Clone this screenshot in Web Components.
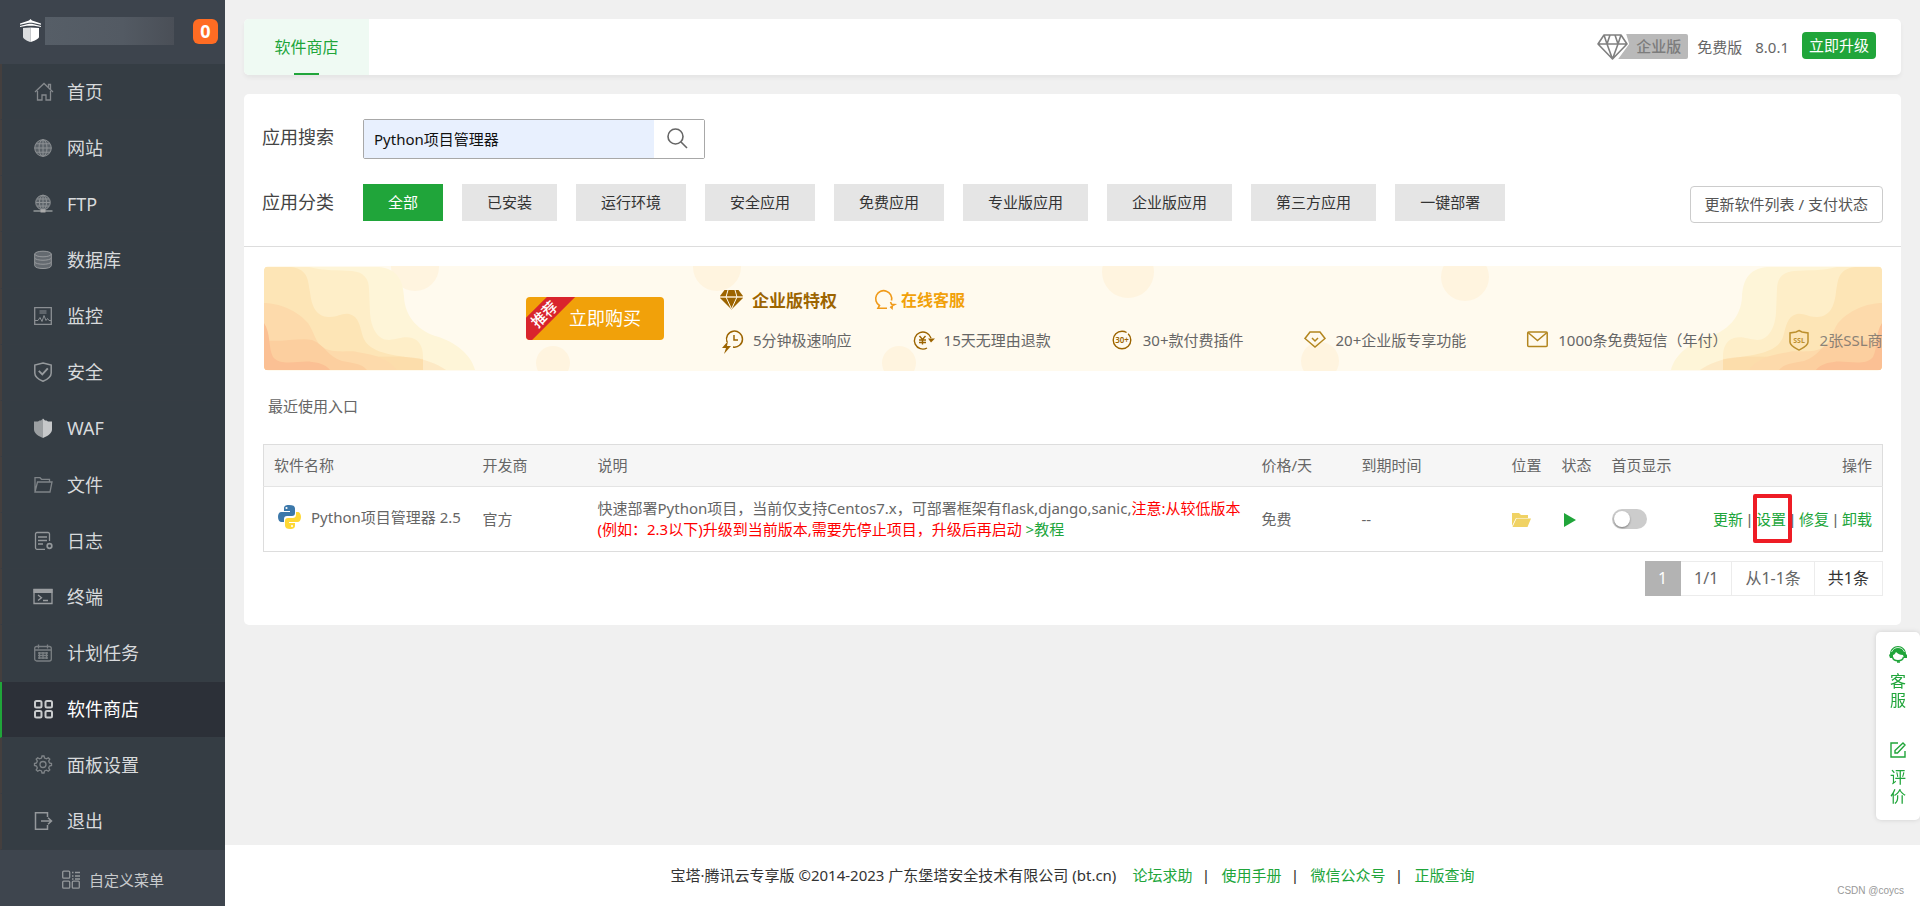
<!DOCTYPE html>
<html lang="zh-CN">
<head>
<meta charset="utf-8">
<meta name="viewport" content="width=device-width, initial-scale=1">
<title>软件商店</title>
<style>
  :root {
    --green: #20a53a;
    --line: #ddd;
    --brown: #9c6400;
    --amber: #f1a10a;
  }
  html, body { margin: 0; }
  body {
    min-height: 100vh;
    display: flex;
    background: #f0f0f0;
    color: #666;
    font: 15px/21px "Noto Sans", "Noto Sans CJK SC", sans-serif;
  }
  main { flex: 1; min-width: 0; display: flex; flex-direction: column; }
  .body { flex: 1; display: flex; flex-direction: column; gap: 19px; padding: 19px; }
</style>
</head>
<body>
<side-bar>
  <side-item icon="home">首页</side-item>
  <side-item icon="globe">网站</side-item>
  <side-item icon="ftp">FTP</side-item>
  <side-item icon="db">数据库</side-item>
  <side-item icon="monitor">监控</side-item>
  <side-item icon="shield">安全</side-item>
  <side-item icon="waf">WAF</side-item>
  <side-item icon="folder">文件</side-item>
  <side-item icon="log">日志</side-item>
  <side-item icon="terminal">终端</side-item>
  <side-item icon="calendar">计划任务</side-item>
  <side-item icon="grid" active>软件商店</side-item>
  <side-item icon="gear">面板设置</side-item>
  <side-item icon="exit">退出</side-item>
</side-bar>
<main>
  <div class="body">
    <top-bar></top-bar>
    <store-card>
      <store-filter slot="filter"></store-filter>
      <promo-banner>
        <promo-feature icon="fast">5分钟极速响应</promo-feature>
        <promo-feature icon="refund">15天无理由退款</promo-feature>
        <promo-feature icon="thirty">30+款付费插件</promo-feature>
        <promo-feature icon="gem">20+企业版专享功能</promo-feature>
        <promo-feature icon="mail">1000条免费短信（年付）</promo-feature>
        <promo-feature icon="ssl" faded>2张SSL商用证书</promo-feature>
      </promo-banner>
      <recent-entry>最近使用入口</recent-entry>
      <software-table></software-table>
      <page-nav></page-nav>
    </store-card>
  </div>
  <site-footer></site-footer>
</main>
<float-tools></float-tools>

<script>
const ICONS = {
  home: '<g fill="none" stroke="#85898d" stroke-width="1.3"><path d="M1 10 10 1.5 19 10"/><path d="M3.5 9v9H8v-5h4v5h4.5V9M14.5 5V2.5h2V7"/></g>',
  globe: '<circle cx="9" cy="10" r="8.3" fill="#5b6268"/><g fill="none" stroke="#8d9194"><circle cx="9" cy="10" r="8.3"/><ellipse cx="9" cy="10" rx="4" ry="8.3"/><path d="M9 1.7v16.6M.7 10h16.6M2 5.8h14M2 14.2h14"/></g>',
  ftp: '<circle cx="9" cy="8.5" r="7.3" fill="#5b6268"/><g fill="none" stroke="#8d9194"><circle cx="9" cy="8.5" r="7.3"/><ellipse cx="9" cy="8.5" rx="3.5" ry="7.3"/><path d="M9 1.5v14M2 8.5h14M3 5h12M3 12h12"/><path stroke-width="1.6" d="M-.5 17h19"/></g><path fill="#aaa" d="M6.500 15.500h5v3h-5z"/>',
  db: '<g fill="#646a70" stroke="#96999c"><path d="M.7 4v11.500C.7 19.500 17.300 19.500 17.300 15.500V4"/><ellipse cx="9" cy="4" rx="8.300" ry="2.800"/><path fill="none" d="M.7 8C2 11 16 11 17.300 8M.7 12C2 15 16 15 17.300 12"/></g>',
  monitor: '<g fill="none" stroke="#8b8f93"><path stroke-width="1.300" d="M.7 1.700h16.600v16.600H.7z"/><path d="M5.500 5h7M5.500 7h7M1 14.500h3l2-3 2 4 2-6 2 5 1.500-2 1.500 2h2"/></g>',
  shield: '<g fill="none" stroke="#969a9d" stroke-width="1.500"><path d="M9 1 17.200 3v8c0 4-4 6.500-8.200 8.300C4.800 17.500.8 15 .8 11V3z"/><path stroke-width="1.900" d="m4.800 8.800 3.500 3.500 5.500-6"/></g>',
  waf: '<path fill="#9b9fa2" d="M9 .5 7 2.500H5.500L4 3.500H0v8c0 4 5 7 9 8.500z"/><path fill="#c6c8ca" d="m9 .5 2 2h1.500l1.500 1h4v8c0 4-5 7-9 8.500z"/>',
  folder: '<g fill="none" stroke="#7f8488" stroke-width="1.300"><path d="M1 17V2.700h5l1.500 1.600h8v3M1 17 3.500 7H18l-2 10z"/></g>',
  log: '<g fill="none" stroke="#94989b" stroke-width="1.300"><path d="M11 18.300H3a1.500 1.500 0 0 1-1.500-1.500V3A1.500 1.500 0 0 1 3 1.500h11A1.500 1.500 0 0 1 15.500 3v7M4 6h9M4 9.500h9M4 13h5"/><circle cx="15.500" cy="15" r="2.300" stroke-width="1.700"/></g>',
  terminal: '<path fill="#9b9ea1" d="M-.5 2h19v4h-19z"/><g fill="none" stroke="#9b9ea1" stroke-width="1.300"><path d="M0 2.500h18v14H0zM4 8l3.500 2.700L4 13.500M9 13.500h5"/></g>',
  calendar: '<g fill="none" stroke="#7a7f83" stroke-width="1.300"><rect x=".7" y="3.500" width="16.600" height="14.500" rx="2"/><path d="M1 7h16M4.500 1.500v4M13.500 1.500v4M4 10h10M4 12.500h10M4 15h10M5.500 9v7M9 9v7M12.500 9v7"/></g>',
  grid: '<g fill="none" stroke="#c9cbcd" stroke-width="2"><rect x="1" y="2" width="6.500" height="6.500" rx="1.500"/><rect x="11.500" y="2" width="6.500" height="6.500" rx="1.500"/><rect x="1" y="12" width="6.500" height="6.500" rx="1.500"/><rect x="11.500" y="12" width="6.500" height="6.500" rx="1.500"/></g>',
  gear: '<g fill="none" stroke="#7f8488" stroke-width="1.300"><path d="m7.500 3 .5-2h2l.5 2 2 .8 1.800-1.100 1.500 1.500-1.100 1.800.8 2 2 .5v2l-2 .5-.8 2 1.100 1.800-1.500 1.500-1.800-1.100-2 .8-.5 2H8l-.5-2-2-.8-1.800 1.100-1.500-1.500 1.100-1.800-.8-2-2-.5v-2l2-.5.8-2-1.100-1.800 1.500-1.500 1.800 1.100z"/><circle cx="9" cy="9.500" r="3"/></g>',
  exit: '<g fill="none" stroke="#94989b" stroke-width="1.500"><path d="M13.500 6V1.700h-12v16.600h12V14M7 10h10.500M14 6.800l3.500 3.200-3.500 3.200"/></g>',
  custom: '<g fill="none" stroke="#94989b" stroke-width="1.300"><rect x=".7" y="1.200" width="7" height="7" rx="1"/><rect x=".7" y="11.200" width="7" height="7" rx="1"/><rect x="10.300" y="11.200" width="7" height="7" rx="1"/><path d="M10 2.500h1.500M13 2.500h5M10 6h1.500M13 6h5M10 9h1.500M13 9h5"/></g>',
  logo: '<path fill="#fff" d="M10.500 0 12 1.500 21 4.500v1.200L12 3.700H9L0 5.700V4.500l9-3zM9 4.800h3l9 2.200v1L14 6.800H7L0 8V7z"/><path fill="#dcdee0" d="M10.500 8.500 3 9v9c0 2 5 4.500 7.500 5z"/><path fill="#fff" d="M10.500 8.500 19 9v9c0 2-6 4.500-8.500 5z"/>',
  search: '<g fill="none" stroke="#666" stroke-width="1.600"><circle cx="8.500" cy="8.500" r="7.500"/><path d="m14 14 6 6"/></g>',
  diamond: '<g fill="none" stroke="#808080" stroke-width="1.600" stroke-linejoin="round"><path d="M7 1h17l6 9-14.500 15L1 10zM1 10h29M7 1l3 9 5.500 15L21 10l3-9M10 10l3-9M21 10l-3-9"/></g>',
  vip: '<path fill="#9c6400" d="M4.500 0h14L23 6H0z"/><path fill="#e2c89b" d="M0 6h23v2H0z"/><path fill="#9c6400" d="M0 8h23L11.500 19.500z"/><path stroke="#fffaee" fill="none" d="m8 0-2 7 5.500 12L17 7l-2-7"/>',
  chat: '<g fill="none" stroke="#f09a1a" stroke-width="1.600"><path d="M16.500 10.500A8 8 0 1 0 4.500 15.500L3 18.200h9"/><path d="m15.500 12 1 2.200 3 .3-2.200 1.200-.3 2.600-1.700-1.600"/></g>',
  fast: '<g fill="none" stroke="#9c6400" stroke-width="1.500"><path d="M5 13a8 8 0 1 1 6 5M12 6v5h4"/></g><path fill="#9c6400" d="M6 12 0 19h4l-2 6 7-8H5z"/>',
  refund: '<g fill="none" stroke="#9c6400" stroke-width="1.400"><path d="M14 19A8.500 8.500 0 1 1 18 9M6.500 7 9.500 10.500 12.500 7M9.500 10.500v5M6 11h7M6 13.500h7"/></g><path fill="#9c6400" d="M15 9.500h7l-4 4z"/>',
  thirty: '<circle cx="10" cy="11" r="8.800" fill="none" stroke="#9c6400" stroke-width="1.400" stroke-dasharray="46 2"/><text x="10" y="14" text-anchor="middle" font-family="Noto Sans,sans-serif" font-size="8" font-weight="600" fill="#9c6400">30+</text>',
  gem: '<g fill="none" stroke="#b3861f" stroke-width="1.500"><path d="M5 3h10l5 6.500L10 18 0 9.500zM7 9l3 3 3-3"/></g>',
  mail: '<g fill="none" stroke="#b3861f" stroke-width="1.500"><rect x=".7" y="3" width="19.500" height="14.500" rx="1"/><path d="m1 3.500 9.500 8 9.500-8"/></g>',
  ssl: '<path fill="none" stroke="#a87400" stroke-width="1.500" d="M10 1.500 13 3l6 1v9c0 4-6 6.500-9 8-3-1.500-9-4-9-8V4l6-1z"/><text x="10" y="14" text-anchor="middle" font-family="Noto Sans,sans-serif" font-size="7" font-weight="700" fill="#a87400">SSL</text>',
  python: '<path fill="#3c78aa" d="M11 0C7 0 6 1.500 6 3.500V6h6v1H3.500C1 7 0 9 0 12s1.500 5 3.500 5H6v-3c0-2 1-3 3-3h5c2 0 3-1 3-3V3.500C17 1 15 0 11 0z"/><circle cx="8.500" cy="3" r="1.100" fill="#fff"/><path fill="#fed835" d="M12 24c4 0 5-1.500 5-3.500V18h-6v-1h8.500c2 0 3.500-2 3.500-5s-1.500-5-3-5h-2v3c0 2-1.500 3-3 3h-5c-2 0-3 1-3 3v4.500c0 2.500 2 3.500 5 3.500z"/><circle cx="14" cy="21" r="1.100" fill="#fff"/>',
  open: '<path fill="#f0d264" d="M0 0h7l2 2h7v3H4L0 13z"/><path fill="#f0d264" d="M4.500 5.500H19L15.500 14H.5z"/>',
  play: '<path fill="#20a53a" d="M2 0 14 7 2 14z"/>',
  service: '<path fill="#20a53a" d="M1 8C1 3 5 0 9 0s8 3 8 8l1 1v3h-3l-1-3c-3 0-5-1-7-3-1 2-2 3-3 3v3H1L0 9z"/><path d="M3.500 11c1 5 10 5 11 0M8 16h3" fill="none" stroke="#20a53a" stroke-width="1.400"/><path d="M2.500 6C5 0 13 0 15.500 6" fill="none" stroke="#fff" stroke-width=".8"/>',
  edit: '<g fill="none" stroke="#20a53a" stroke-width="1.400"><path d="M8 1H1v14h14V9M5 11V8.500L13 1l2 2-7.500 8z"/></g>'
};

const define = (name, html, setup) => {
  const tpl = document.createElement('template');
  tpl.innerHTML = html;
  customElements.define(name, class extends HTMLElement {
    constructor() {
      super();
      this.attachShadow({ mode: 'open' }).append(tpl.content.cloneNode(true));
    }
    connectedCallback() { if (setup) setup(this, this.shadowRoot); }
  });
};

/* An icon: name, w and h give the drawing and its box. */
define('x-icon', `
<style>:host{display:inline-block;flex:none;line-height:0}svg{display:block;overflow:visible}</style>
<svg aria-hidden="true"></svg>`, (el, root) => {
  const w = el.getAttribute('w') || 18, h = el.getAttribute('h') || 20;
  const svg = root.querySelector('svg');
  svg.setAttribute('width', w);
  svg.setAttribute('height', h);
  svg.setAttribute('viewBox', `0 0 ${w} ${h}`);
  svg.innerHTML = ICONS[el.getAttribute('name')];
});

define('side-item', `
<style>
  :host{display:flex;box-sizing:border-box;border-left:2px solid #443f3e;border-bottom:1px solid #363d44}
  a{flex:1;display:flex;align-items:center;gap:15px;padding:0 32px;color:#d8dadc;font-size:18px;line-height:24px;text-decoration:none}
  :host([active]){background:#2c3038;border-left-color:var(--green)}
  :host([active]) a{color:#fff}
</style>
<a href="#"><x-icon></x-icon><slot></slot></a>`, (el, root) =>
  root.querySelector('x-icon').replaceWith(Object.assign(document.createElement('template'),
    { innerHTML: `<x-icon name="${el.getAttribute('icon')}"></x-icon>` }).content));

define('side-bar', `
<style>
  :host{flex:none;width:225px;display:flex;flex-direction:column;background:#353d44}
  header{height:64px;box-sizing:border-box;padding:0 7px 2px 20px;display:flex;align-items:center;background:#3d444d}
  .host{width:129px;height:28px;margin-left:4px;background:linear-gradient(90deg,#565e67,#535a63 60%,#4a4f57)}
  .badge{margin-left:auto;width:25px;height:25px;border-radius:6px;background:#ff6c23;color:#fff;font-weight:700;font-size:18px;line-height:24px;text-align:center}
  nav{flex:1;display:grid;grid-auto-rows:minmax(48px,1fr)}
  .custom{height:56px;display:flex;align-items:center;gap:9px;padding:4px 0 0 62px;box-sizing:border-box;background:#3e454e;color:#c8cacc;text-decoration:none;white-space:nowrap}
</style>
<header><x-icon name="logo" w="21" h="24"></x-icon><span class="host"></span><span class="badge">0</span></header>
<nav><slot></slot></nav>
<a class="custom" href="#"><x-icon name="custom"></x-icon>自定义菜单</a>`);

define('top-bar', `
<style>
  :host{display:flex;height:56px;border-radius:5px;background:#fff;box-shadow:0 3px 4px #0000000c}
  .tab{width:125px;display:flex;flex-direction:column;align-items:center;background:#effaf3;border-radius:5px 0 0 5px;color:var(--green);font-size:16px;line-height:56px;text-decoration:none}
  .tab::after{content:"";width:25px;height:2px;margin-top:-2px;background:var(--green)}
  .info{margin-left:auto;padding:0 25px 0 0;display:flex;align-items:center}
  .plan{display:flex;align-items:center;margin-right:9px;margin-bottom:1px}
  .plan span{box-sizing:border-box;width:70px;height:25px;padding-left:18px;margin-left:-10px;background:#b9b9b9;color:#7c7c7c;font-weight:500;line-height:25px;border-radius:0 2px 2px 0;clip-path:polygon(8px 0,100% 0,100% 100%,0 100%,11px 10px)}
  .ver{margin:0 13px}
  button{height:27px;padding:0 7px;margin-bottom:3px;border:0;border-radius:4px;background:var(--green);color:#fff;font:inherit}
</style>
<a class="tab" href="#">软件商店</a>
<div class="info">
  <div class="plan"><x-icon name="diamond" w="31" h="26"></x-icon><span>企业版</span></div>
  免费版<span class="ver">8.0.1</span><button>立即升级</button>
</div>`);

define('store-card', `
<style>
  :host{display:block;padding-bottom:29px;border-radius:5px;background:#fff}
  .list{padding:19px 18px 0 19px}
</style>
<slot name="filter"></slot>
<div class="list"><slot></slot></div>`);

define('store-filter', `
<style>
  :host{display:block;padding:25px 18px 21px;border-bottom:1px solid var(--line)}
  .row{display:flex;align-items:flex-start}
  .row + .row{margin-top:25px}
  .label{flex:none;width:101px;font-size:18px;line-height:37px;color:#444}
  .search{display:flex;width:342px;height:40px;box-sizing:border-box;border:1px solid #a8a8a8;border-radius:2px}
  input{flex:1;min-width:0;padding:0 10px;border:0;background:#e8f0fe;color:#111;font:inherit}
  .search button{width:50px;padding:0 17px 0 13px;border:0;background:#fff}
  .cats{display:flex;flex-wrap:wrap;gap:19px}
  .cats button{height:37px;padding:0 25px;border:0;background:#e5e5e5;color:#333;font:inherit}
  .cats .on{background:var(--green);color:#fff}
  .refresh{height:37px;margin:2px 0 2px auto;padding:0 14px;border:1px solid #ccc;border-radius:4px;background:#fff;color:#555;font:inherit}
</style>
<div class="row">
  <label class="label" for="q">应用搜索</label>
  <div class="search"><input id="q" type="text" value="Python项目管理器"><button aria-label="搜索"><x-icon name="search" w="20" h="20"></x-icon></button></div>
</div>
<div class="row">
  <span class="label">应用分类</span>
  <div class="cats"><button class="on">全部</button><button>已安装</button><button>运行环境</button><button>安全应用</button><button>免费应用</button><button>专业版应用</button><button>企业版应用</button><button>第三方应用</button><button>一键部署</button></div>
  <button class="refresh">更新软件列表 / 支付状态</button>
</div>`);

define('promo-feature', `
<style>
  :host{flex:none;display:flex;align-items:center;gap:10px;white-space:nowrap}
  :host([faded]){opacity:.75}
</style>
<slot name="icon"></slot><slot></slot>`, (el, root) =>
  root.querySelector('slot').innerHTML = `<x-icon name="${el.getAttribute('icon')}" w="21" h="22"></x-icon>`);

const WAVES = `
  <path fill="#fef5d8" d="M0 0H115C135 2 139 15 140 30 141 50 155 65 175 70 195 77 208 90 211 103H0z"/>
  <path fill="#feeec8" d="M0 0H45C60 4 75 3 88 4 100 5 105 12 105 22L106 46C107 60 113 73 125 73 135 72 140 69 148 71 157 74 159 82 159 90V103H0z"/>
  <path fill="#fde5b6" d="M0 0H27C45 2 44 15 46 25 48 45 56 50 66 50 74 50 78 46 85 47 95 49 96 60 99 70 104 83 118 88 159 92V103H0z"/>
  <path fill="#fbc88a" fill-opacity=".25" d="M89 103V85C110 92 125 89 142 90 160 91 173 97 182 103z"/>
  <path fill="#fddaab" d="M0 36C10 36 30 40 44 56 50 65 52 76 58 80 68 87 85 83 93 85 112 88 125 92 133 103H0z"/>
  <path fill="#fccf9f" d="M0 73C15 76 36 70 48 73 60 77 64 90 78 94 90 96 98 97 103 103H0z"/>
  <path fill="#fbc094" d="M0 56C7 66 4 80 9 90 17 100 36 93 48 95 58 96 63 99 66 103H0z"/>`;

define('promo-banner', `
<style>
  :host{display:flex;position:relative;box-sizing:border-box;height:105px;margin:0 1px;padding:22px 0 0 262px;overflow:hidden;border-radius:5px;background:#fffaee}
  .art{position:absolute;left:0;top:1px}
  .art.right{left:auto;right:0;transform:scaleX(-1)}
  .dots{position:absolute;inset:0;width:100%;height:100%}
  .buy{flex:none;position:relative;width:138px;height:43px;margin-top:9px;padding:0 0 0 20px;border:0;border-radius:4px;overflow:hidden;background:var(--amber);color:#fff;font:inherit;font-size:18px}
  .ribbon{position:absolute;left:-32px;top:7px;width:100px;height:20px;background:#d9242d;font-size:15px;line-height:20px;font-weight:500;transform:rotate(-45deg)}
  .text{position:relative;flex:none;margin-left:56px}
  .links,.features{display:flex;align-items:center}
  .links{height:24px;gap:8px;font-weight:700}
  .links a{display:flex;align-items:center;text-decoration:none}
  .vip{gap:9px;margin-right:30px;color:var(--brown);font-size:17px}
  .chat{gap:6px;color:var(--amber);font-size:16px}
  .features{height:24px;margin-top:16px;padding-left:2px;gap:61px}
</style>
<svg class="dots" viewBox="0 0 1618 105" preserveAspectRatio="xMidYMin slice" fill="#fff4df">
  <circle cx="151" cy="1" r="24"/><circle cx="453" cy="1" r="24"/><circle cx="864" cy="6" r="26"/><circle cx="1201" cy="11" r="24"/>
  <circle cx="289" cy="97" r="17"/><circle cx="635" cy="97" r="17"/><circle cx="1056" cy="95" r="19"/>
</svg>
<svg class="art" width="212" height="103">${WAVES}</svg>
<svg class="art right" width="212" height="103">${WAVES}</svg>
<button class="buy"><span class="ribbon">推荐</span>立即购买</button>
<div class="text">
  <div class="links">
    <a class="vip" href="#"><x-icon name="vip" w="23" h="20"></x-icon>企业版特权</a>
    <a class="chat" href="#"><x-icon name="chat" w="20" h="20"></x-icon>在线客服</a>
  </div>
  <div class="features"><slot></slot></div>
</div>`);

define('recent-entry', `
<style>:host{display:block;padding:25px 5px 27px}</style><slot></slot>`);

define('software-table', `
<style>
  :host{display:block}
  table{width:100%;table-layout:fixed;border-collapse:collapse;border:1px solid var(--line)}
  th,td{padding:0 10px;text-align:left;font-weight:400}
  th{height:41px;background:#f6f6f6;border-bottom:1px solid #e4e4e4}
  td{height:64px}
  .name{display:flex;align-items:center;gap:10px;padding-left:4px;margin-top:-4px}
  .red{color:#f00}
  a{color:var(--green);text-decoration:none}
  .last{text-align:right}
  .ops{display:flex;justify-content:flex-end;gap:4px}
  .ops i{width:5px;font:15px/21px "Liberation Sans",sans-serif;text-align:center}
  .marked{position:relative}
  .marked::after{content:"";position:absolute;inset:-15px -6px -13px -3px;border:4px solid #ee1c25;border-radius:2px}
  x-icon{vertical-align:middle}
  input{appearance:none;display:block;width:35px;height:20px;margin:0;padding:2px;border-radius:10px;background:#ccc}
  input::before{content:"";display:block;width:16px;height:16px;border-radius:8px;background:#fff;box-shadow:0 1px 2px #0006}
</style>
<table>
  <colgroup><col style="width:209px"><col style="width:115px"><col><col style="width:100px"><col style="width:150px"><col style="width:50px"><col style="width:50px"><col style="width:100px"><col style="width:181px"></colgroup>
  <thead><tr><th>软件名称</th><th>开发商</th><th>说明</th><th>价格/天</th><th>到期时间</th><th>位置</th><th>状态</th><th>首页显示</th><th class="last">操作</th></tr></thead>
  <tbody><tr>
    <td><div class="name"><x-icon name="python" w="23" h="24"></x-icon>Python项目管理器 2.5</div></td>
    <td>官方</td>
    <td>快速部署Python项目，当前仅支持Centos7.x，可部署框架有flask,django,sanic,<span class="red">注意:从较低版本(例如：2.3以下)升级到当前版本,需要先停止项目，升级后再启动</span> <a href="#">&gt;教程</a></td>
    <td>免费</td>
    <td>--</td>
    <td><a href="#" aria-label="打开目录"><x-icon name="open" w="19" h="14"></x-icon></a></td>
    <td><x-icon name="play" w="14" h="14"></x-icon></td>
    <td><input type="checkbox" role="switch" aria-label="首页显示"></td>
    <td class="last"><div class="ops"><a href="#">更新</a><i>|</i><a href="#" class="marked">设置</a><i>|</i><a href="#">修复</a><i>|</i><a href="#">卸载</a></div></td>
  </tr></tbody>
</table>`);

define('page-nav', `
<style>
  :host{display:flex;justify-content:flex-end;margin-top:9px;font-size:16px;line-height:33px}
  span{padding:0 13px;border:1px solid #ececec;border-left:0}
  .cur{border-color:#b3b3b3;background:#b3b3b3;color:#fff}
  .total{color:#333}
</style>
<span class="cur">1</span><span>1/1</span><span>从1-1条</span><span class="total">共1条</span>`);

define('site-footer', `
<style>
  :host{position:relative;display:flex;justify-content:center;align-items:center;height:61px;background:#fff;color:#333}
  nav{display:flex;margin-left:16px;gap:11px}
  a{color:var(--green);text-decoration:none}
  nav span{width:5px;margin-right:2px;text-align:center;font-family:"Liberation Sans",sans-serif}
  small{position:absolute;right:16px;bottom:5px;color:#999;font:10px/20px "Liberation Sans",sans-serif}
</style>
<span>宝塔·腾讯云专享版 ©2014-2023 广东堡塔安全技术有限公司 (bt.cn)</span>
<nav><a href="#">论坛求助</a><span>|</span><a href="#">使用手册</a><span>|</span><a href="#">微信公众号</a><span>|</span><a href="#">正版查询</a></nav>
<small>CSDN @coycs</small>`);

define('float-tools', `
<style>
  :host{position:fixed;right:0;bottom:86px;width:44px;box-sizing:border-box;padding:14px 0;display:flex;flex-direction:column;gap:32px;border-radius:5px;background:#fff;box-shadow:0 0 5px #0002}
  a{display:flex;flex-direction:column;align-items:center;gap:9px;color:var(--green);font-size:16px;line-height:19px;text-decoration:none}
  span{width:16px}
</style>
<a href="#"><x-icon name="service" w="18" h="17"></x-icon><span>客服</span></a>
<a href="#"><x-icon name="edit" w="16" h="17"></x-icon><span>评价</span></a>`);
</script>
</body>
</html>
